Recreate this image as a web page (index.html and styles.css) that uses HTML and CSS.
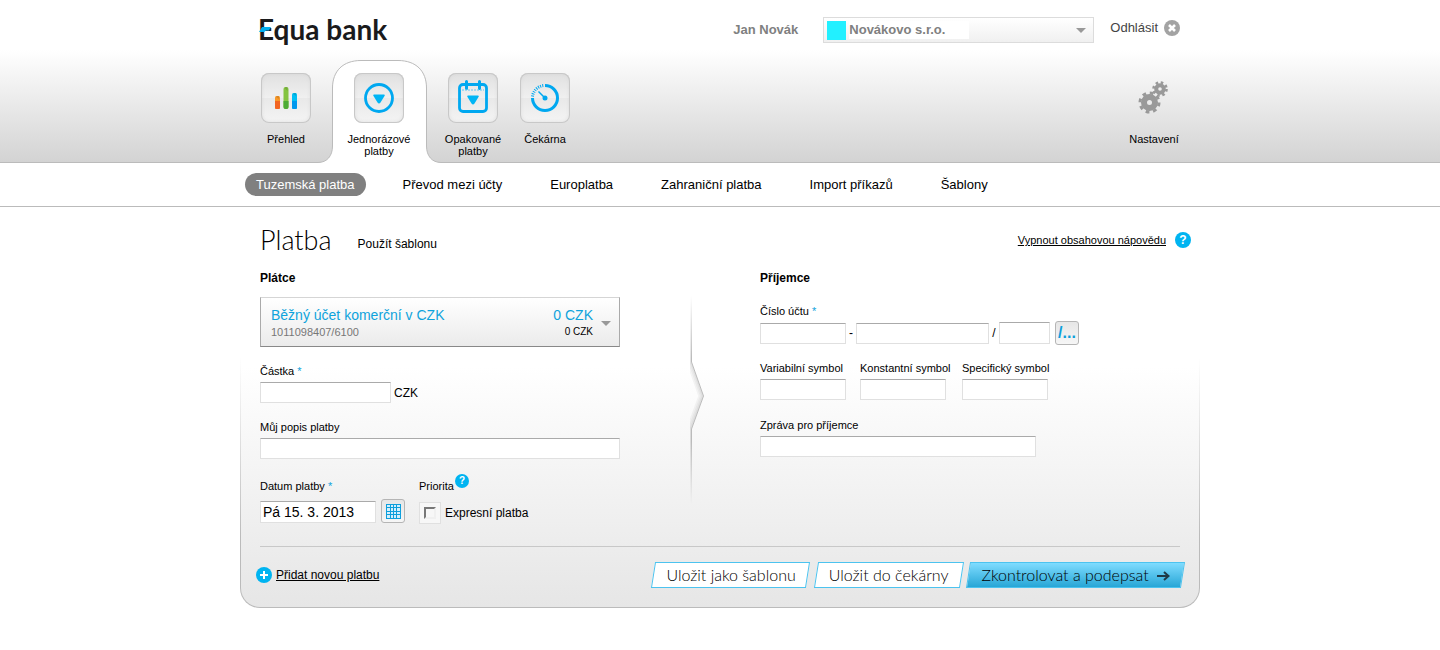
FILE: index.html
```html
<!DOCTYPE html>
<html lang="cs">
<head>
<meta charset="utf-8">
<meta name="viewport" content="width=device-width, initial-scale=1">
<title>Equa bank – Platba</title>
<link rel="stylesheet" href="styles.css">
</head>
<body>
<header class="header">
  <div class="container topbar">
    <a class="logo" href="#">
      <svg class="logo-accent" viewBox="0 0 12 5" aria-hidden="true"><path d="M3 0h9l-2 3.500H7L5 5H0z" fill="#00aeef"/></svg>
      Equa bank
    </a>
    <div class="session">
      <span class="user">Jan Novák</span>
      <div class="company">
        <span class="swatch"></span>
        <select class="company-select" aria-label="Společnost"><option>Novákovo s.r.o.</option></select>
        <svg class="caret" viewBox="0 0 10 5" aria-hidden="true"><path d="M0 0h10L5 5z"/></svg>
      </div>
      <a class="logout" href="#">Odhlásit
        <svg class="icon-close" viewBox="0 0 16 16" aria-hidden="true"><circle cx="8" cy="8" r="8" fill="#a3a3a3"/><path d="M5 5l6 6M11 5l-6 6" stroke="#fff" stroke-width="2.600"/></svg>
      </a>
    </div>
  </div>
  <nav class="container mainnav" aria-label="Hlavní navigace">
    <a class="nav-item" href="#">
      <span class="tile">
        <svg viewBox="0 0 50 50" aria-hidden="true">
          <rect x="14" y="23" width="5" height="13" rx="1.500" fill="#f89828"/><path d="M14 28h5v6.500a1.500 1.500 0 0 1-1.500 1.500h-2a1.500 1.500 0 0 1-1.500-1.500z" fill="#f26522"/>
          <rect x="22.500" y="14" width="5" height="22" rx="2" fill="#84c441"/><path d="M22.500 28h5v6a2 2 0 0 1-2 2h-1a2 2 0 0 1-2-2z" fill="#4dab35"/>
          <rect x="31" y="20" width="5" height="16" rx="1.500" fill="#00bff3"/><path d="M31 28h5v6.500a1.500 1.500 0 0 1-1.500 1.500h-2a1.500 1.500 0 0 1-1.500-1.500z" fill="#0098ee"/>
          <path d="M15 24l1-1h2v3zM23.500 15l1-1h2v4zM32 21l1-1h2v3z" fill="#000" opacity=".12"/>
        </svg>
      </span>
      <span>Přehled</span>
    </a>
    <a class="nav-item nav-active" href="#" aria-current="page">
      <svg class="tab-shape" viewBox="0 0 123 103" aria-hidden="true"><path d="M0 102.500C9 102.500 14.500 96 14.500 86V28C14.500 11 25 .500 43 .500H80C98 .500 108.500 11 108.500 28V86C108.500 96 114 102.500 123 102.500V103H0z" fill="#fff"/><path d="M0 102.500C9 102.500 14.500 96 14.500 86V28C14.500 11 25 .500 43 .500H80C98 .500 108.500 11 108.500 28V86C108.500 96 114 102.500 123 102.500" fill="none" stroke="#bbb"/></svg>
      <span class="tile">
        <svg viewBox="0 0 50 50" aria-hidden="true"><circle cx="25" cy="25" r="13.500" fill="none" stroke="#00a8f0" stroke-width="2.800"/><path d="M20 21.500h10q1.500 0 .5 1.500l-4 6.500q-1.500 2-3 0l-4-6.500q-1-1.500.5-1.500z" fill="#00b5f5"/></svg>
      </span>
      <span>Jednorázové platby</span>
    </a>
    <a class="nav-item" href="#">
      <span class="tile">
        <svg viewBox="0 0 50 50" aria-hidden="true"><rect x="11.500" y="11.500" width="27" height="27" rx="3.500" fill="none" stroke="#00a8f0" stroke-width="2.800"/><path d="M18.500 8.500v7M31.500 8.500v7" stroke="#00a8f0" stroke-width="3" stroke-linecap="round"/><path d="M14 17h22" stroke="#5fc8f5" stroke-dasharray="2 1"/><path d="M20 22.500h10q1.500 0 .5 1.500l-4 6.500q-1.500 2-3 0l-4-6.500q-1-1.500.5-1.500z" fill="#00b5f5"/></svg>
      </span>
      <span>Opakované platby</span>
    </a>
    <a class="nav-item" href="#">
      <span class="tile">
        <svg viewBox="0 0 50 50" aria-hidden="true"><path d="M25 12.500a12.500 12.500 0 1 1-12.500 12.500" fill="none" stroke="#00a8f0" stroke-width="3"/><path d="M12.500 23.500A12.500 12.500 0 0 1 24 12.500" fill="none" stroke="#00a8f0" stroke-width="3" stroke-dasharray="1 1.200"/><path d="M18.500 18.500L25 25" stroke="#00a8f0" stroke-width="1.500"/><circle cx="25" cy="25" r="2.500" fill="#00a8f0"/></svg>
      </span>
      <span>Čekárna</span>
    </a>
    <a class="nav-item nav-settings" href="#">
      <span class="tile tile-plain">
        <svg viewBox="0 0 50 50" aria-hidden="true" fill="none" stroke="#999"><circle cx="20.500" cy="29.500" r="5.500" stroke-width="6"/><circle cx="20.500" cy="29.500" r="9.500" stroke-width="3" stroke-dasharray="3.700 3.760"/><circle cx="31" cy="16" r="3.800" stroke-width="4"/><circle cx="31" cy="16" r="6.500" stroke-width="2.600" stroke-dasharray="2.500 2.600"/></svg>
      </span>
      <span>Nastavení</span>
    </a>
  </nav>
</header>
<nav class="subnav" aria-label="Typ platby">
  <div class="container subnav-list">
    <a class="sub-item sub-active" href="#" aria-current="page">Tuzemská platba</a>
    <a class="sub-item" href="#">Převod mezi účty</a>
    <a class="sub-item" href="#">Europlatba</a>
    <a class="sub-item" href="#">Zahraniční platba</a>
    <a class="sub-item" href="#">Import příkazů</a>
    <a class="sub-item" href="#">Šablony</a>
  </div>
</nav>
<main class="container panel">
  <div class="title-row">
    <h1 class="title">Platba</h1>
    <a class="template-link" href="#">Použít šablonu</a>
    <a class="help-link" href="#">Vypnout obsahovou nápovědu</a>
    <span class="help" aria-hidden="true">?</span>
  </div>
  <form class="payment">
    <div class="columns">
      <section class="payer">
        <h2 class="section-title">Plátce</h2>
        <button class="account" type="button" aria-haspopup="listbox">
          <span class="account-main"><span class="account-name">Běžný účet komerční v CZK</span><span class="account-number">1011098407/6100</span></span>
          <span class="account-main account-sums"><span class="account-name">0 CZK</span><span class="account-sub">0 CZK</span></span>
          <svg class="caret" viewBox="0 0 10 5" aria-hidden="true"><path d="M0 0h10L5 5z"/></svg>
        </button>
        <div class="field">
          <label class="label" for="amount">Částka <span class="required">*</span></label>
          <div class="amount-row"><input class="input w-amount" id="amount" type="text"><span class="unit">CZK</span></div>
        </div>
        <div class="field">
          <label class="label" for="note">Můj popis platby</label>
          <input class="input w-full" id="note" type="text">
        </div>
        <div class="date-row">
          <div class="date-field">
            <label class="label" for="date">Datum platby <span class="required">*</span></label>
            <div class="date-control">
              <input class="input w-date" id="date" type="text" value="Pá 15. 3. 2013">
              <button class="square" type="button" aria-label="Kalendář">
                <svg class="icon-grid" viewBox="0 0 15 15" aria-hidden="true"><path d="M0 0h15v15H0z" fill="#0d9fdc"/><path d="M1 1h3v2H1zM5 1h2v2H5zM8 1h2v2H8zM11 1h3v2h-3zM1 4h3v3H1zM5 4h2v3H5zM8 4h2v3H8zM11 4h3v3h-3zM1 8h3v2H1zM5 8h2v2H5zM8 8h2v2H8zM11 8h3v2h-3zM1 11h3v3H1zM5 11h2v3H5zM8 11h2v3H8zM11 11h3v3h-3z" fill="#d4effc"/></svg>
              </button>
            </div>
          </div>
          <div class="date-field">
            <span class="label priority">Priorita <span class="help help-small" aria-hidden="true">?</span></span>
            <label class="express"><span class="check-box"><input class="check" type="checkbox"></span>Expresní platba</label>
          </div>
        </div>
      </section>
      <svg class="divider" viewBox="0 0 30 208" aria-hidden="true">
        <defs>
          <linearGradient id="fade" x1="0" y1="0" x2="0" y2="1"><stop offset="0" stop-color="#fff" stop-opacity="0"/><stop offset=".3" stop-color="#fff"/><stop offset=".7" stop-color="#fff"/><stop offset="1" stop-color="#fff" stop-opacity="0"/></linearGradient>
          <mask id="fade-mask"><rect width="30" height="208" fill="url(#fade)"/></mask>
          <clipPath id="left-side"><path d="M0 0h16.500v66l12 34-12 33v75H0z"/></clipPath>
        </defs>
        <g mask="url(#fade-mask)" fill="none">
          <g clip-path="url(#left-side)" stroke="#000" stroke-opacity=".04"><path d="M16.500 0v66l12 34-12 33v75" stroke-width="10"/><path d="M16.500 0v66l12 34-12 33v75" stroke-width="7"/><path d="M16.500 0v66l12 34-12 33v75" stroke-width="4"/></g>
          <path d="M16.500 0v66l12 34-12 33v75" stroke="#bbb"/>
        </g>
      </svg>
      <section class="payee">
        <h2 class="section-title">Příjemce</h2>
        <div class="field field-first">
          <label class="label" for="acc">Číslo účtu <span class="required">*</span></label>
          <div class="number-row">
            <input class="input w-symbol" type="text" aria-label="Předčíslí účtu"><span class="separator">-</span>
            <input class="input w-number" id="acc" type="text"><span class="separator">/</span>
            <input class="input w-code" type="text" aria-label="Kód banky">
            <button class="square square-code" type="button" aria-label="Vybrat banku">/...</button>
          </div>
        </div>
        <div class="symbols field">
          <div><label class="label" for="vs">Variabilní symbol</label><input class="input w-symbol" id="vs" type="text"></div>
          <div><label class="label" for="ks">Konstantní symbol</label><input class="input w-symbol" id="ks" type="text"></div>
          <div><label class="label" for="ss">Specifický symbol</label><input class="input w-symbol" id="ss" type="text"></div>
        </div>
        <div class="field">
          <label class="label" for="msg">Zpráva pro příjemce</label>
          <input class="input w-message" id="msg" type="text">
        </div>
      </section>
    </div>
    <div class="actions">
      <a class="add-link" href="#"><svg class="icon-close" viewBox="0 0 16 16" aria-hidden="true"><circle cx="8" cy="8" r="8" fill="#00b4f1"/><path d="M4 8h8M8 4v8" stroke="#fff" stroke-width="2"/></svg><span class="add-text">Přidat novou platbu</span></a>
      <button class="action" type="button">Uložit jako šablonu</button>
      <button class="action" type="button">Uložit do čekárny</button>
      <button class="action action-primary" type="submit">Zkontrolovat a podepsat
        <svg class="arrow" viewBox="0 0 13 10" aria-hidden="true"><path d="M0 5h11M7 1l4.500 4L7 9" fill="none" stroke="#1f3a47" stroke-width="2"/></svg>
      </button>
    </div>
  </form>
</main>
</body>
</html>
```
FILE: styles.css
```css
* { box-sizing: border-box; }

body {
  margin: 0;
  background: #fff;
  color: #000;
  font: 12px/16px "Liberation Sans", Arial, sans-serif;
}

a { color: inherit; text-decoration: none; }

.container { max-width: 960px; margin: 0 auto; }

/* Header */
.header {
  background: linear-gradient(#fff 50px, #d3d3d3 100%);
  border-bottom: 1px solid #bbb;
}
.topbar {
  display: flex;
  justify-content: space-between;
  align-items: center;
  height: 60px;
  padding: 0 20px 2px 18px;
}
.logo {
  position: relative;
  color: #1a1a1c;
  font: 700 28px/32px Lato, sans-serif;
}
.logo-accent { position: absolute; left: 1px; top: 14px; width: 12px; height: 5px; }
.session { display: flex; align-items: center; padding-top: 2px; }
.user { margin-right: 25px; color: #808080; font-size: 13px; font-weight: 700; }
.company {
  display: flex;
  align-items: center;
  width: 271px;
  height: 26px;
  margin-right: 16px;
  padding: 0 7px 0 3px;
  border: 1px solid #dcdcdc;
  background: linear-gradient(#fff, #f0f0f0);
}
.swatch { width: 19px; height: 19px; margin-right: 3px; background: #22f0ff; }
.company-select {
  flex: 1;
  height: 18px;
  padding: 0;
  border: 0;
  appearance: none;
  background: linear-gradient(#fff, #fff) no-repeat 0 0 / 120px 18px;
  color: #808080;
  font: 700 13px/18px "Liberation Sans", Arial, sans-serif;
}
.caret { width: 10px; height: 5px; fill: #999; }
.logout { display: flex; align-items: center; gap: 6px; color: #444; padding-bottom: 4px; font-size: 13px; }
.icon-close { width: 16px; height: 16px; }

/* Main navigation */
.mainnav { display: flex; height: 102px; padding: 0 10px; }
.nav-item {
  display: flex;
  flex-direction: column;
  align-items: center;
  gap: 10px;
  width: 72px;
  padding-top: 13px;
  font-size: 11px;
  line-height: 12px;
  text-align: center;
}
.nav-active { position: relative; width: 95px; margin: 0 10px; padding-left: 10px; padding-right: 11px; }
.nav-settings { margin-left: auto; }
.tab-shape { position: absolute; left: -14px; top: 0; width: 123px; height: 103px; }
.tile {
  position: relative;
  width: 50px;
  height: 50px;
  border-radius: 8px;
  background: linear-gradient(#e0e0e0, #f0f0f0 50%, #e9e9e9 51%, #f4f4f4);
  box-shadow: inset 0 0 0 1px #c8c8c8, inset 0 0 4px #d4d4d4;
}
.tile svg { display: block; }
.tile-plain { background: none; box-shadow: none; }
.tile + span { position: relative; }

/* Secondary navigation */
.subnav { border-bottom: 1px solid #bbb; }
.subnav-list { display: flex; gap: 26px; padding: 10px 5px; }
.sub-item { padding: 0 11px; border-radius: 12px; font-size: 13px; line-height: 23px; }
.sub-active { background: #808080; color: #fff; }

/* Payment panel */
.panel {
  padding: 19px 19px;
  border: 1px solid transparent;
  border-top: 0;
  border-radius: 0 0 20px 20px;
  background:
    linear-gradient(#fff 160px, #e6e6e6) padding-box,
    linear-gradient(#fff 150px, #bbb 330px) border-box;
}
.title-row { display: flex; align-items: center; height: 28px; }
.title { margin: 0 26px 0 0; font: 300 27px/28px Lato, sans-serif; }
.template-link { padding-top: 8px; }
.help-link { margin-left: auto; font-size: 11px; text-decoration: underline; }
.help {
  width: 16px;
  height: 16px;
  margin: 0 -11px 0 9px;
  border-radius: 50%;
  background: #00b4f1;
  color: #fff;
  font-size: 12px;
  font-weight: 700;
  text-align: center;
}
.columns {
  display: grid;
  grid-template-columns: 360fr 140fr 420fr;
  padding-bottom: 19px;
  border-bottom: 1px solid #c8c8c8;
}
.section-title { margin: 16px 0 11px; font-size: 12px; line-height: 16px; }
.account {
  display: flex;
  align-items: center;
  width: 100%;
  height: 50px;
  padding: 2px 8px 0 10px;
  border: 1px solid #aaa;
  border-top-color: #d5d5d5;
  border-bottom-color: #888;
  background: linear-gradient(#fff, #ebebeb);
  color: #000;
  font: 10px/16px "Liberation Sans", Arial, sans-serif;
  text-align: left;
}
.account-main { display: flex; flex-direction: column; }
.account-name { color: #0fa3dc; font-size: 14px; line-height: 18px; }
.account-number { color: #777; font-size: 11px; }
.account-sums { margin: 0 8px 0 auto; text-align: right; }
.field { margin-top: 17px; }
.label { display: block; margin-bottom: 4px; font-size: 11px; line-height: 14px; }
.required { color: #0fa3dc; }
.input {
  display: block;
  height: 21px;
  padding: 0 2px;
  border: 1px solid #e0e0e0;
  border-top-color: #aaa;
  background: #fff;
  font: 14px/18px "Liberation Sans", Arial, sans-serif;
}
.w-amount { width: 131px; }
.w-full { width: 100%; }
.w-date { width: 116px; height: 22px; }
.w-symbol { width: 86px; }
.w-number { width: 133px; }
.w-code { width: 51px; height: 22px; }
.w-message { width: 276px; }
.amount-row { display: flex; align-items: center; gap: 3px; }
.date-row { display: flex; gap: 14px; margin-top: 20px; }
.date-field .label { margin-bottom: 6px; }
.date-control { display: flex; align-items: flex-end; gap: 5px; }
.square {
  display: flex;
  align-items: center;
  justify-content: center;
  width: 24px;
  height: 24px;
  padding: 0;
  border: 1px solid #b5b5b5;
  border-radius: 3px;
  background: linear-gradient(#e6e6e6, #f6f6f6);
  color: #0d9fdc;
}
.square-code { margin-left: 5px; font: 700 16px/20px "Liberation Sans", Arial, sans-serif; }
.icon-grid { width: 15px; height: 15px; }
.priority { position: relative; }
.help-small {
  position: absolute;
  left: 36px;
  top: -5px;
  width: 14px;
  height: 14px;
  margin: 0;
  font-size: 10px;
  line-height: 14px;
}
.express { display: flex; align-items: center; gap: 4px; height: 28px; }
.check-box { padding: 4px; border: 1px solid #e0e0e0; background: #f7f7f7; }
.check {
  display: block;
  appearance: none;
  width: 12px;
  height: 12px;
  margin: 0;
  border: 2px solid #f0f0f0;
  border-top-color: #777;
  border-left-color: #777;
}
.divider { align-self: start; justify-self: center; width: 30px; height: 208px; margin-top: 42px; }
.field-first { margin-top: 18px; }
.field-first .label { margin-bottom: 3px; }
.number-row { display: flex; align-items: center; height: 24px; }
.separator { width: 10px; text-align: center; }
.symbols { display: grid; grid-template-columns: 86px 88px 86px; gap: 14px; margin-top: 16px; }
.symbols .label { white-space: nowrap; }
.payee .field:last-child { margin-top: 18px; }

/* Form actions */
.actions { display: flex; align-items: center; gap: 7px; margin: 15px -3px 0 -4px; }
.add-link { display: flex; align-items: center; gap: 4px; margin-right: auto; }
.add-text { text-decoration: underline; }
.action {
  position: relative;
  z-index: 0;
  height: 26px;
  padding: 0 13px;
  border: 0;
  background: none;
  color: #000;
  font: 300 16px/26px Lato, sans-serif;
}
.action::before {
  content: "";
  position: absolute;
  inset: 0;
  z-index: -1;
  border: 1px solid #4cc3ef;
  background: #fff;
  transform: skewX(-9deg);
}
.action-primary::before { background: linear-gradient(#7fdcff, #27a6d6); }
.arrow { width: 13px; height: 10px; margin-left: 4px; }
```
